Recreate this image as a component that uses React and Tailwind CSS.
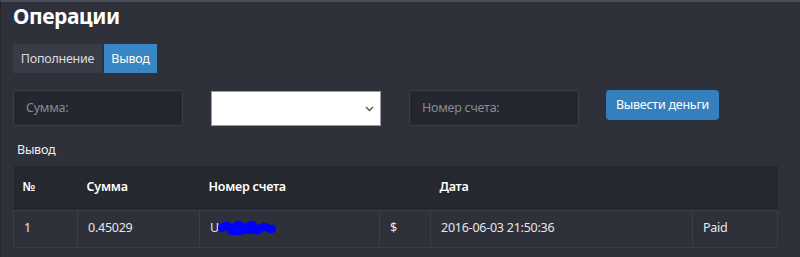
export default function App() {
  const font = { fontFamily: '"Noto Sans", "Open Sans", sans-serif' };
  return (
    <div
      className="w-[800px] h-[257px] bg-[#2e303a] border-t-2 border-t-[#4a4c56] border-l border-l-[#24262e] pl-3 text-[#e9e9ec] overflow-hidden tracking-[-0.25px]"
      style={font}
    >
      <h1 className="text-[21px] font-bold leading-[28px] text-white tracking-[-0.4px]">Операции</h1>
      <div className="mt-[14px] flex text-[12.5px] leading-[29px]">
        <div className="h-[29px] w-[89px] bg-[#393b47] text-center text-[#dcdce0]">Пополнение</div>
        <div className="ml-[2px] h-[29px] w-[53px] bg-[#3886c3] text-center text-white">Вывод</div>
      </div>
      <div className="mt-[17px] flex items-start">
        <div className="h-[36px] w-[170px] bg-[#252730] border border-[#3a3c48] pl-3 text-[12.5px] leading-[34px] text-[#8a8a8e]">Сумма:</div>
        <div className="ml-[28px] mt-[1px] h-[35px] w-[170px] bg-white border border-[#9a9aa0] flex items-center justify-end pr-[6px]">
          <svg width="9" height="6" viewBox="0 0 9 6"><path d="M1 1l3.5 3.5L8 1" stroke="#555" strokeWidth="1.4" fill="none" /></svg>
        </div>
        <div className="ml-[28px] h-[36px] w-[170px] bg-[#252730] border border-[#3a3c48] pl-3 text-[12.5px] leading-[34px] text-[#8a8a8e]">Номер счета:</div>
        <button className="ml-[27px] h-[30px] w-[113px] rounded-[4px] bg-[#3480bf] text-[12.5px] text-white">Вывести деньги</button>
      </div>
      <div className="mt-[14px] pl-[4px] text-[12.5px] leading-[20px] text-[#eeeef0]">Вывод</div>
      <table className="mt-[6px] w-[764px] table-fixed border-collapse text-[12.5px]">
        <colgroup>
          <col className="w-[64px]" />
          <col className="w-[122px]" />
          <col className="w-[180px]" />
          <col className="w-[51px]" />
          <col className="w-[262px]" />
          <col className="w-[85px]" />
        </colgroup>
        <thead>
          <tr className="h-[44px] bg-[#262830] text-left text-white">
            <th className="pl-[9px] font-semibold">№</th>
            <th className="pl-[9px] font-semibold">Сумма</th>
            <th className="pl-[9px] font-semibold">Номер счета</th>
            <th></th>
            <th className="pl-[9px] font-semibold">Дата</th>
            <th></th>
          </tr>
        </thead>
        <tbody>
          <tr className="h-[37px] text-[#e6e6ea]">
            <td className="border border-[#3a3c48] pl-[10px]">1</td>
            <td className="border border-[#3a3c48] pl-[10px]">0.45029</td>
            <td className="border border-[#3a3c48] pl-[10px]">
              <span className="inline-flex items-center">
                U
                <svg width="58" height="18" viewBox="0 0 58 18" className="-ml-[1px]">
                  <path d="M4 8c2-3 5-3 7-1s3 3 5 1 3-4 6-3 2 4 5 4 4-5 7-4 3 5 7 4 4-3 7-2 4 3 6 2" stroke="#0000ff" strokeWidth="8" strokeLinecap="round" fill="none" />
                  <path d="M12 12c4 1 8 1 12 0s10-1 16 0" stroke="#0000ff" strokeWidth="5" strokeLinecap="round" fill="none" />
                </svg>
              </span>
            </td>
            <td className="border border-[#3a3c48] pl-[10px]">$</td>
            <td className="border border-[#3a3c48] pl-[10px]">2016-06-03 21:50:36</td>
            <td className="border border-[#3a3c48] pl-[10px]">Paid</td>
          </tr>
        </tbody>
      </table>
    </div>
  );
}
